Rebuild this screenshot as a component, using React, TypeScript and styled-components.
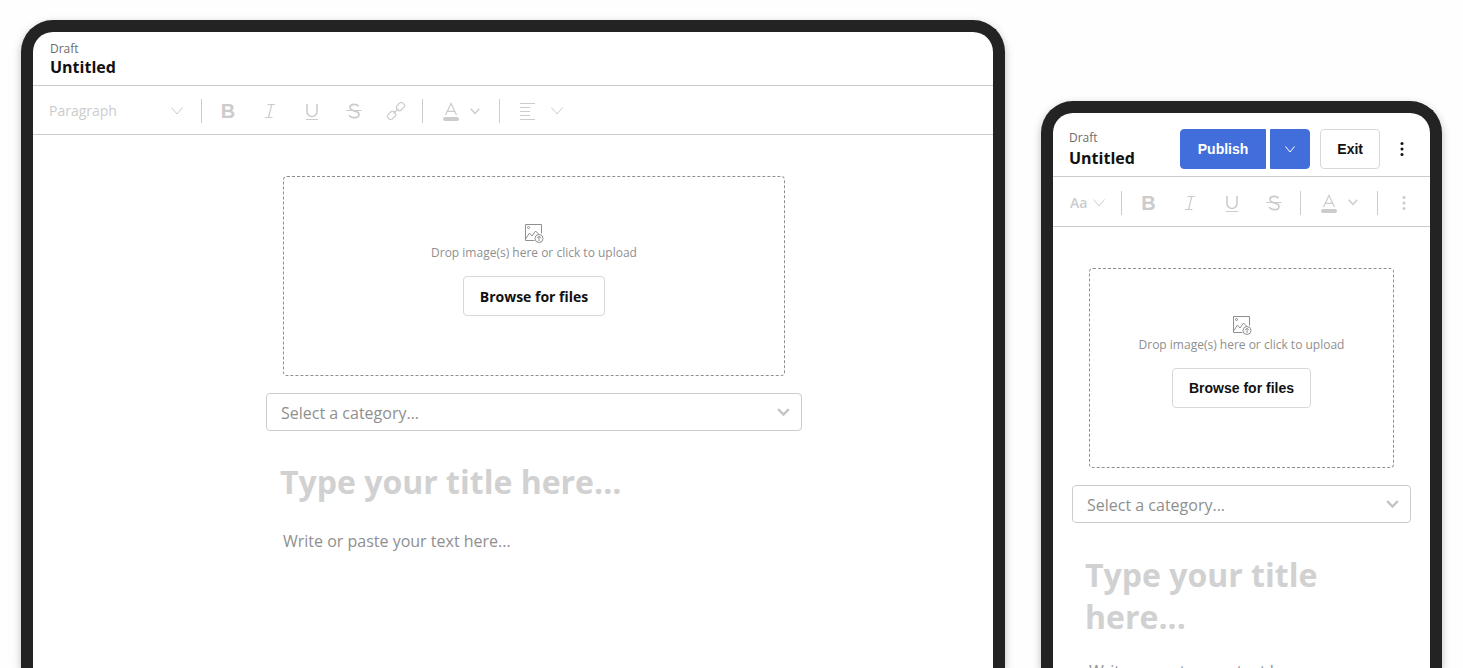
import React from "react";
import styled, { createGlobalStyle, css } from "styled-components";

const GlobalStyle = createGlobalStyle`
  *, *::before, *::after { box-sizing: border-box; }
  body {
    margin: 0;
    background: #fefefe;
    color: #111;
    font-family: "Open Sans", "Noto Sans", sans-serif;
  }
  button, select, textarea { font-family: inherit; }
`;

const Page = styled.main`
  display: grid;
  grid-template-columns: minmax(0, 984fr) minmax(0, 401fr);
  column-gap: 36px;
  height: 100vh;
  padding: 20px 21px 0;
  overflow: hidden;
`;

const Device = styled.section<{ $drop?: number }>`
  display: flex;
  flex-direction: column;
  margin-top: ${(p) => p.$drop ?? 0}px;
  border: 12px solid #232323;
  border-bottom: 0;
  border-radius: 32px 32px 0 0;
  background: #fff;
  box-shadow: 0 3px 8px rgba(0, 0, 0, 0.26);
  overflow: hidden;
`;

const Header = styled.header<{ $compact?: boolean }>`
  display: flex;
  justify-content: space-between;
  align-items: flex-start;
  flex-shrink: 0;
  padding: ${(p) => (p.$compact ? "16px 16px 7px" : "8px 17px")};
  border-bottom: 1px solid #ccc;
`;

const DocInfo = styled.div<{ $gap?: number }>`
  display: flex;
  flex-direction: column;
  gap: ${(p) => p.$gap ?? 0}px;
  padding-top: 1px;
`;

const Status = styled.span`
  font-size: 12px;
  line-height: 16px;
  color: #6b6b6b;
`;

const DocName = styled.h1`
  margin: 0;
  font-size: 16px;
  line-height: 20px;
  font-weight: 700;
`;

const Actions = styled.div`
  display: flex;
  align-items: center;
  gap: 10px;
`;

const SplitButton = styled.div`
  display: flex;
  gap: 4px;
`;

const actionButton = css`
  height: 40px;
  font-family: "Liberation Sans", Arial, sans-serif;
  font-size: 14px;
  font-weight: 700;
  cursor: pointer;
`;

const PrimaryButton = styled.button<{ $side: "start" | "end" }>`
  ${actionButton}
  display: flex;
  align-items: center;
  justify-content: center;
  min-width: 40px;
  padding: 0 ${(p) => (p.$side === "start" ? 17 : 0)}px;
  border: 1px solid #426edb;
  border-radius: ${(p) => (p.$side === "start" ? "4px 0 0 4px" : "0 4px 4px 0")};
  background: #426edb;
  color: #fff;
`;

const OutlineButton = styled.button<{ $brand?: boolean }>`
  ${actionButton}
  padding: 0 16px;
  border: 1px solid #d8d8d8;
  border-radius: 4px;
  background: #fff;
  color: #111;
  ${(p) => p.$brand && css`font-family: inherit;`}
`;

const IconButton = styled.button<{ $width: number }>`
  display: flex;
  align-items: center;
  justify-content: center;
  flex-shrink: 0;
  width: ${(p) => p.$width}px;
  height: 40px;
  padding: 0;
  border: 0;
  background: none;
  color: inherit;
  cursor: pointer;
`;

const Toolbar = styled.div<{ $compact?: boolean }>`
  display: flex;
  align-items: center;
  flex-shrink: 0;
  height: ${(p) => (p.$compact ? 50 : 49)}px;
  padding: ${(p) => (p.$compact ? "2px 0 0 17px" : "2px 16px 0")};
  border-bottom: 1px solid #ccc;
  color: #ccc;
`;

const Divider = styled.span`
  flex-shrink: 0;
  width: 1px;
  height: 24px;
  background: #ccc;
`;

const ToolGroup = styled.div`
  display: flex;
  padding: 0 5px;
`;

const BoldGlyph = styled.span`
  font-family: "Liberation Sans", Arial, sans-serif;
  font-size: 20px;
  line-height: 24px;
  font-weight: 700;
`;

const MenuButton = styled.button<{ $gap: number; $pad: string }>`
  display: flex;
  align-items: center;
  gap: ${(p) => p.$gap}px;
  height: 40px;
  padding: ${(p) => p.$pad};
  border: 0;
  background: none;
  color: inherit;
  font-size: 14px;
  font-weight: 600;
  cursor: pointer;
`;

const StyleField = styled.label`
  display: grid;
  align-items: center;
  width: 152px;
  & > * { grid-area: 1 / 1; }
  & > svg { justify-self: end; margin-right: 18px; pointer-events: none; }
`;

const StyleSelect = styled.select`
  appearance: none;
  width: 100%;
  height: 40px;
  padding: 0 0 2px;
  border: 0;
  background: none;
  color: #ccc;
  font-size: 14px;
`;

const Editor = styled.div<{ $compact?: boolean }>`
  display: flex;
  flex-direction: column;
  align-items: center;
  padding: ${(p) => (p.$compact ? "41px 19px 0" : "41px 0 0 42px")};
`;

const Column = styled.div`
  display: flex;
  flex-direction: column;
  width: 100%;
  max-width: 536px;
`;

const DropZone = styled.div`
  display: flex;
  flex-direction: column;
  align-items: center;
  height: 200px;
  margin: 0 17px;
  padding-top: 46px;
  border: 1px dashed #8f8f8f;
  border-radius: 4px;
`;

const DropHint = styled.p`
  margin: 2px 0 15px;
  font-size: 12px;
  line-height: 16px;
  color: #8f8f8f;
`;

const CategoryField = styled.label`
  display: grid;
  align-items: center;
  margin-top: 17px;
  & > * { grid-area: 1 / 1; }
  & > svg { justify-self: end; margin-right: 12px; color: #c4c4c4; pointer-events: none; }
`;

const CategorySelect = styled.select`
  appearance: none;
  width: 100%;
  height: 38px;
  padding: 2px 14px 0;
  border: 1px solid #ccc;
  border-radius: 4px;
  background: #fff;
  color: #8f8f8f;
  font-size: 16px;
`;

const TitleInput = styled.textarea<{ $compact?: boolean }>`
  display: block;
  margin: ${(p) => (p.$compact ? "31px 13px 0" : "30px 14px 0")};
  padding: 0;
  border: 0;
  outline: 0;
  resize: none;
  overflow: hidden;
  background: none;
  font-size: 32px;
  line-height: 42px;
  font-weight: 700;
  &::placeholder { color: #d1d1d1; opacity: 1; }
`;

const BodyInput = styled.textarea<{ $compact?: boolean }>`
  display: block;
  height: 96px;
  margin: ${(p) => (p.$compact ? 21 : 26)}px 17px 0;
  padding: 0;
  border: 0;
  outline: 0;
  resize: none;
  overflow: hidden;
  background: none;
  font-size: 16px;
  line-height: 24px;
  &::placeholder { color: #8f8f8f; opacity: 1; }
`;

type ChevronProps = { width?: number; height?: number; stroke?: number };

const Chevron = ({ width = 12, height = 8, stroke = 1 }: ChevronProps) => (
  <svg width={width} height={height} viewBox={`0 0 ${width} ${height}`} fill="none" stroke="currentColor" strokeWidth={stroke} aria-hidden="true">
    <path d={`M${stroke / 2} ${stroke / 2}L${width / 2} ${height - stroke}L${width - stroke / 2} ${stroke / 2}`} />
  </svg>
);

const DotsIcon = () => (
  <svg width="4" height="16" viewBox="0 0 4 16" fill="currentColor" aria-hidden="true">
    <circle cx="2" cy="2.500" r="1.500" />
    <circle cx="2" cy="8" r="1.500" />
    <circle cx="2" cy="13.500" r="1.500" />
  </svg>
);

const ToolIcon = ({ children }: { children: React.ReactNode }) => (
  <svg width="20" height="20" viewBox="0 0 20 20" fill="none" stroke="currentColor" strokeWidth="1.2" aria-hidden="true">
    {children}
  </svg>
);

const ItalicIcon = () => (
  <ToolIcon>
    <path d="M7.500 3.500h7.500M5 16.500h7.500M11.700 3.500L8.500 16.500" />
  </ToolIcon>
);

const UnderlineIcon = () => (
  <ToolIcon>
    <path strokeWidth="1.600" d="M5 3v7.500a4.800 4.800 0 0 0 10 0V3" />
    <path d="M4 18.500h12" />
  </ToolIcon>
);

const StrikeIcon = () => (
  <ToolIcon>
    <path strokeWidth="1.700" d="M14.600 5.400C13.800 4 12.200 3.400 10.400 3.400C7.800 3.400 6 4.600 6 6.500C6 8.600 8 9.300 10.200 9.800C12.800 10.400 15 11.100 15 13.400C15 15.500 13 16.700 10.400 16.700C8 16.700 6 15.800 5.200 14" />
    <path d="M2.500 9.500h15" />
  </ToolIcon>
);

const LinkIcon = () => (
  <ToolIcon>
    <g transform="rotate(-45 10 10)">
      <rect x="-0.500" y="7" width="8.500" height="6" rx="2.400" />
      <rect x="12" y="7" width="8.500" height="6" rx="2.400" />
      <path d="M6.500 10h7" />
    </g>
  </ToolIcon>
);

const ColorIcon = () => (
  <ToolIcon>
    <path d="M4.500 14L10 2.500L15.500 14M6.500 10.300h7" />
    <path strokeWidth="4" strokeLinecap="round" d="M4 18h12" />
  </ToolIcon>
);

const AlignIcon = () => (
  <svg width="16" height="18" viewBox="0 0 16 18" fill="none" stroke="currentColor" aria-hidden="true">
    <path d="M0 1.500h15M0 5.500h10M0 9.500h10M0 13.500h10M0 17.500h15" />
  </svg>
);

const UploadImageIcon = () => (
  <svg width="20" height="20" viewBox="0 0 20 20" fill="none" stroke="#8f8f8f" aria-hidden="true">
    <path d="M10.500 17.500H1.500V1.500h16V10.500" />
    <circle cx="4.500" cy="4.500" r="1" />
    <path d="M2 15.500l3.500-5.500 2.500 3 3.500-5 3.500 3.500" />
    <circle cx="15" cy="15.500" r="4" />
    <path d="M15 18v-4.500M13 15.200l2-2 2 2" />
  </svg>
);

const FormattingTools = ({ children }: { children?: React.ReactNode }) => (
  <>
    <Divider />
    <ToolGroup>
      <IconButton $width={42} type="button" aria-label="Bold"><BoldGlyph>B</BoldGlyph></IconButton>
      <IconButton $width={42} type="button" aria-label="Italic"><ItalicIcon /></IconButton>
      <IconButton $width={42} type="button" aria-label="Underline"><UnderlineIcon /></IconButton>
      <IconButton $width={42} type="button" aria-label="Strikethrough"><StrikeIcon /></IconButton>
      {children}
    </ToolGroup>
  </>
);

const ColorMenu = () => (
  <>
    <Divider />
    <MenuButton type="button" $gap={9} $pad="0 19px 0 18px" aria-label="Text colour">
      <ColorIcon />
      <Chevron width={10} height={7} stroke={1.5} />
    </MenuButton>
    <Divider />
  </>
);

const EditorForm = ({ id, compact, titleRows }: { id: string; compact?: boolean; titleRows: number }) => (
  <Editor $compact={compact}>
    <Column>
      <DropZone>
        <UploadImageIcon />
        <DropHint>Drop image(s) here or click to upload</DropHint>
        <OutlineButton type="button" $brand={!compact}>Browse for files</OutlineButton>
      </DropZone>
      <CategoryField htmlFor={`${id}-category`}>
        <CategorySelect id={`${id}-category`} aria-label="Category">
          <option>Select a category...</option>
        </CategorySelect>
        <Chevron width={13} height={9} stroke={2.4} />
      </CategoryField>
      <TitleInput $compact={compact} rows={titleRows} placeholder="Type your title here..." aria-label="Title" />
      <BodyInput $compact={compact} placeholder="Write or paste your text here..." aria-label="Text" />
    </Column>
  </Editor>
);

export default function App() {
  return (
    <>
      <GlobalStyle />
      <Page>
        <Device>
          <Header>
            <DocInfo>
              <Status>Draft</Status>
              <DocName>Untitled</DocName>
            </DocInfo>
          </Header>
          <Toolbar>
            <StyleField htmlFor="text-style">
              <StyleSelect id="text-style" aria-label="Text style">
                <option>Paragraph</option>
              </StyleSelect>
              <Chevron />
            </StyleField>
            <FormattingTools>
              <IconButton $width={42} type="button" aria-label="Link"><LinkIcon /></IconButton>
            </FormattingTools>
            <ColorMenu />
            <MenuButton type="button" $gap={15} $pad="0 20px" aria-label="Alignment">
              <AlignIcon />
              <Chevron />
            </MenuButton>
          </Toolbar>
          <EditorForm id="desktop" titleRows={1} />
        </Device>
        <Device $drop={81}>
          <Header $compact>
            <DocInfo $gap={2}>
              <Status>Draft</Status>
              <DocName>Untitled</DocName>
            </DocInfo>
            <Actions>
              <SplitButton>
                <PrimaryButton type="button" $side="start">Publish</PrimaryButton>
                <PrimaryButton type="button" $side="end" aria-label="Publish options">
                  <Chevron width={10} height={7} />
                </PrimaryButton>
              </SplitButton>
              <OutlineButton type="button">Exit</OutlineButton>
              <IconButton $width={24} type="button" aria-label="More"><DotsIcon /></IconButton>
            </Actions>
          </Header>
          <Toolbar $compact>
            <MenuButton type="button" $gap={6} $pad="0 16px 0 0" aria-label="Text style">
              Aa
              <Chevron />
            </MenuButton>
            <FormattingTools />
            <ColorMenu />
            <IconButton $width={52} type="button" aria-label="More tools"><DotsIcon /></IconButton>
          </Toolbar>
          <EditorForm id="phone" compact titleRows={2} />
        </Device>
      </Page>
    </>
  );
}
